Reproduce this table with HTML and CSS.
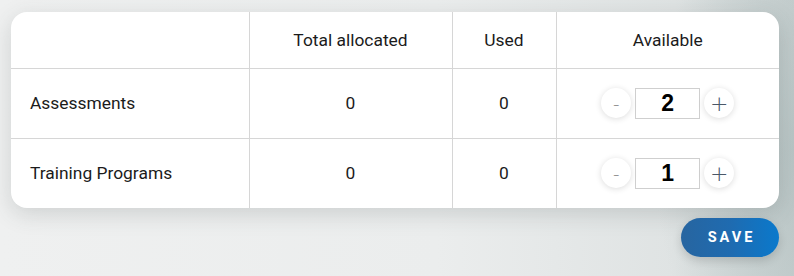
FILE: index.html
```html
<!DOCTYPE html>
<html lang="en">
<head>
<meta charset="utf-8">
<title>Allocation</title>
<link rel="stylesheet" href="styles.css">
</head>
<body>
<div class="page">
  <div class="card">
    <table class="grid">
      <colgroup>
        <col class="c1"><col class="c2"><col class="c3"><col class="c4">
      </colgroup>
      <thead>
        <tr class="head">
          <th></th>
          <th>Total allocated</th>
          <th>Used</th>
          <th>Available</th>
        </tr>
      </thead>
      <tbody>
        <tr class="row">
          <td class="label">Assessments</td>
          <td>0</td>
          <td>0</td>
          <td>
            <div class="stepper">
              <button class="round minus" type="button">-</button>
              <div class="value">2</div>
              <button class="round plus" type="button">+</button>
            </div>
          </td>
        </tr>
        <tr class="row">
          <td class="label">Training Programs</td>
          <td>0</td>
          <td>0</td>
          <td>
            <div class="stepper">
              <button class="round minus" type="button">-</button>
              <div class="value">1</div>
              <button class="round plus" type="button">+</button>
            </div>
          </td>
        </tr>
      </tbody>
    </table>
  </div>
  <div class="actions">
    <button class="save" type="button">SAVE</button>
  </div>
</div>
</body>
</html>
```
FILE: styles.css
```css
html, body {
  margin: 0;
  height: 100%;
}
body {
  font-family: Roboto, "Liberation Sans", Arial, sans-serif;
  color: #1b1b1b;
  background:
    radial-gradient(ellipse 140px 260px at 100% 55%, rgba(170,186,186,0.55), rgba(170,186,186,0) 100%),
    linear-gradient(90deg, #eff0f0 0%, #ebeded 55%, #dfe3e3 85%, #c9d1d1 100%);
  overflow: hidden;
}
.page {
  padding: 12px 15px 0 11px;
  width: 768px;
}
.card {
  background: #fff;
  border-radius: 16px;
  box-shadow: 0 6px 22px rgba(60, 70, 70, 0.18);
  overflow: hidden;
}
.grid {
  width: 100%;
  border-collapse: collapse;
  table-layout: fixed;
}
.c1 { width: 238px; }
.c2 { width: 203px; }
.c3 { width: 104px; }
.c4 { width: 223px; }
.grid th, .grid td {
  border-left: 1px solid #d6d6d6;
  border-top: 1px solid #d6d6d6;
  text-align: center;
  font-size: 17.4px;
  font-weight: 400;
  padding: 0;
}
.grid tr > :first-child { border-left: none; }
.grid thead th { border-top: none; }
.head { height: 56px; }
.row { height: 70px; }
.grid td.label {
  text-align: left;
  padding-left: 19px;
}
.stepper {
  display: flex;
  align-items: center;
  justify-content: center;
  gap: 4px;
}
.round {
  width: 30px;
  height: 30px;
  border-radius: 50%;
  border: none;
  background: #fff;
  box-shadow: 0 1px 6px rgba(0, 0, 0, 0.14);
  padding: 0;
  font-family: "DejaVu Sans", sans-serif;
  font-weight: 300;
  display: flex;
  align-items: center;
  justify-content: center;
}
.minus { color: #777; font-size: 18px; }
.plus { color: #4a5868; font-size: 22px; }
.value {
  width: 63px;
  height: 29px;
  border: 1px solid #cfcfcf;
  display: flex;
  align-items: center;
  justify-content: center;
  font-family: "Liberation Sans", Arial, sans-serif;
  font-weight: 700;
  font-size: 23px;
  color: #000;
}
.actions {
  display: flex;
  justify-content: flex-end;
  margin-top: 10px;
}
.save {
  width: 98px;
  height: 39px;
  border: none;
  border-radius: 20px;
  background: linear-gradient(90deg, #2765a0 0%, #1f6bb0 50%, #0a79cc 100%);
  color: #fff;
  font-family: Roboto, "Liberation Sans", sans-serif;
  font-weight: 700;
  font-size: 14.5px;
  letter-spacing: 3px;
  padding: 0 0 0 3px;
  box-shadow: 0 4px 10px rgba(0, 0, 0, 0.15);
}
```
